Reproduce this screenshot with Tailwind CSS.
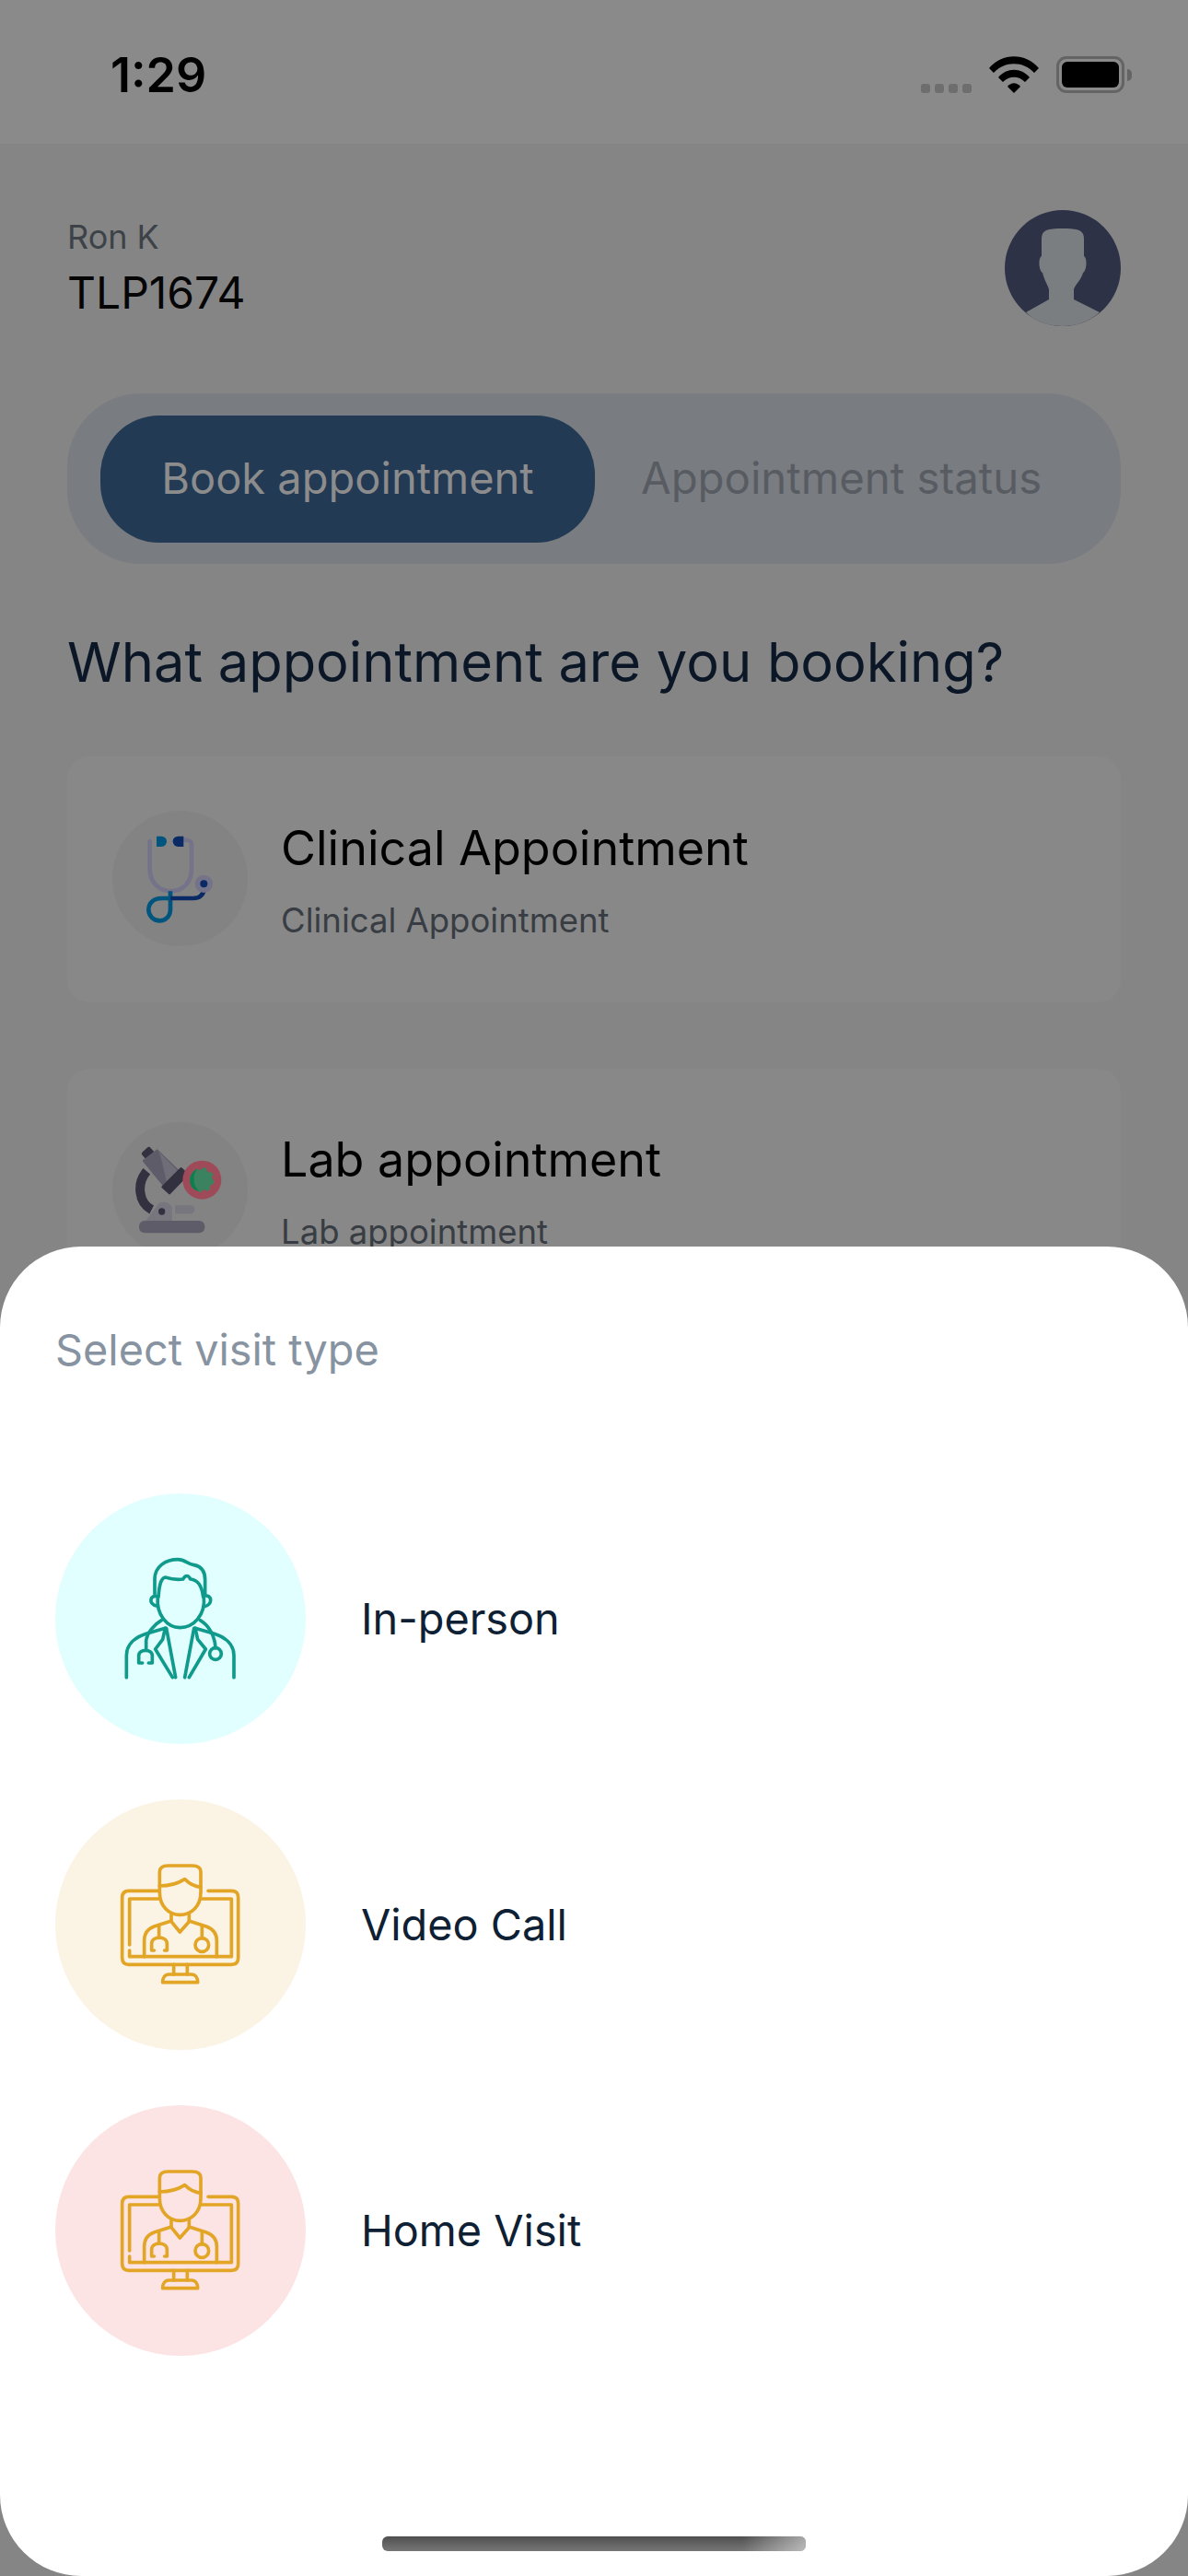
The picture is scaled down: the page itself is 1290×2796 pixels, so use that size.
<!DOCTYPE html>
<html lang="en">
<head>
    <meta charset="UTF-8">
    <meta name="viewport" content="width=device-width, initial-scale=1.0">
    <title>Select visit type</title>
    <script src="https://cdn.jsdelivr.net/npm/@tailwindcss/browser@4"></script>
</head>
<body class="bg-[#858585]">
    <div class="relative w-[1290px] h-[2796px] overflow-hidden bg-[#858585] font-['Inter',sans-serif]">

        <!-- status bar -->
        <div class="h-[156px] bg-[#8a8a8a] flex items-start justify-between pl-[120px] pr-[61px] pt-[52px]">
            <span class="text-[52px] leading-[60px] font-semibold text-black">1:29</span>
            <div class="flex items-start pt-[9px]">
                <div class="flex gap-[5px] mt-[30px] mr-[19px]">
                    <span class="w-[10px] h-[10px] rounded-[3px] bg-[#6e6e6e]"></span>
                    <span class="w-[10px] h-[10px] rounded-[3px] bg-[#6e6e6e]"></span>
                    <span class="w-[10px] h-[10px] rounded-[3px] bg-[#6e6e6e]"></span>
                    <span class="w-[10px] h-[10px] rounded-[3px] bg-[#6e6e6e]"></span>
                </div>
                <svg class="w-[54px] h-[40px] mr-[19px]" viewBox="0 0 54 40">
                    <path d="M0 13 C14 -4 40 -4 54 13 L49 18 C37 5 17 5 5 18 Z" fill="#000"/>
                    <path d="M10 23 C19 12 35 12 44 23 L39 28 C32 21 22 21 15 28 Z" fill="#000"/>
                    <path d="M20 33 C24 28 30 28 34 33 L27 40 Z" fill="#000"/>
                </svg>
                <div class="flex items-center">
                    <div class="w-[74px] h-[40px] rounded-[11px] border-[3px] border-[#646464] p-[3px]">
                        <div class="w-full h-full rounded-[6px] bg-black"></div>
                    </div>
                    <span class="w-[5px] h-[13px] ml-[3px] rounded-r-[5px] bg-[#646464]"></span>
                </div>
            </div>
        </div>

        <div class="px-[73px]">
            <!-- user row -->
            <div class="flex items-start justify-between pt-[72px]">
                <div class="pt-[7px]">
                    <p class="text-[36px] leading-[44px] text-[#3d4248]">Ron K</p>
                    <p class="text-[48px] leading-[56px] mt-[11px] text-[#050505]">TLP1674</p>
                </div>
                <svg class="w-[126px] h-[126px]" viewBox="0 0 126 126">
                    <circle cx="63" cy="63" r="63" fill="#2d3246"/>
                    <path d="M40 31 C40 21 48 20 63 20 C78 20 86 21 86 31 L86 50 C90 52 89 66 85 68 C83 76 77 80 75 86 L75 97 L103 111 C92 121 78 126 63 126 C48 126 33 121 23 111 L48 97 L48 86 C46 80 43 76 41 68 C37 66 36 52 40 50 Z" fill="#7a7e80"/>
                </svg>
            </div>

            <!-- tabs -->
            <div class="mt-[73px] h-[185px] rounded-[80px] bg-[#797c81] flex items-center pl-[36px]">
                <div class="w-[537px] h-[138px] rounded-[64px] bg-[#233a55] flex items-center justify-center text-[47px] text-[#8c8c8c]">Book appointment</div>
                <div class="pl-[50px] text-[47.3px] text-[#585c62]">Appointment status</div>
            </div>

            <h1 class="mt-[70px] text-[59.6px] leading-[72px] text-[#0b1726]">What appointment are you booking?</h1>

            <!-- appointment cards -->
            <div class="mt-[67px] flex flex-col gap-[72px]">
                <div class="h-[267px] rounded-[24px] bg-[#888888] flex items-start pt-[59px] pl-[49px]">
                    <div class="w-[147px] h-[147px] rounded-full bg-[#838383] shrink-0">
                        <svg class="w-[147px] h-[147px]" viewBox="0 0 441 441" fill="none">
                            <path d="M122 100 V190 C122 235 155 262 190 262 C228 262 258 235 258 190 L258 112 C258 100 252 95 235 95" stroke="#75738a" stroke-width="14" stroke-linecap="round"/>
                            <path d="M144 83 H160 A17 17 0 0 1 160 117 H144 Z" fill="#00557f"/>
                            <path d="M232 83 H214 A17 17 0 0 0 214 117 H232 Z" fill="#0a2a66"/>
                            <path d="M189 262 V320 C189 345 172 358 154 358 C134 358 118 342 118 322 C118 300 135 285 160 285 H189" stroke="#00557f" stroke-width="14"/>
                            <path d="M189 285 H264 C285 285 296 272 300 255" stroke="#0a2a66" stroke-width="14"/>
                            <circle cx="298" cy="238" r="29" fill="#75738a"/>
                            <circle cx="298" cy="238" r="12" fill="#0a2a66"/>
                        </svg>
                    </div>
                    <div class="ml-[36px] mt-[8px]">
                        <p class="text-[52px] leading-[66px] text-black">Clinical Appointment</p>
                        <p class="mt-[22px] text-[36.5px] leading-[46px] text-[#383d44]">Clinical Appointment</p>
                    </div>
                </div>
                <div class="h-[267px] rounded-[24px] bg-[#888888] flex items-start pt-[58px] pl-[49px]">
                    <div class="w-[147px] h-[147px] rounded-full bg-[#838383] shrink-0">
                        <svg class="w-[147px] h-[147px]" viewBox="0 0 441 441" fill="none">
                            <path d="M112 160 C78 200 85 262 128 285" stroke="#33313f" stroke-width="30"/>
                            <rect x="98" y="86" width="36" height="30" rx="7" transform="rotate(-42 116 101)" fill="#33313f"/>
                            <path d="M104 126 L146 94 L214 160 L170 206 Z" fill="#5e5c68" stroke="#5e5c68" stroke-width="10" stroke-linejoin="round"/>
                            <path d="M150 94 C162 120 170 170 178 198 L214 160 Z" fill="#6f6d77"/>
                            <path d="M224 151 L244 171 L186 231 L164 211 Z" fill="#33313f" stroke="#33313f" stroke-width="8" stroke-linejoin="round"/>
                            <circle cx="292" cy="188" r="63" fill="#9f4a58"/>
                            <circle cx="292" cy="188" r="34" fill="#3b8360"/>
                            <circle cx="292" cy="188" r="36" stroke="#3b8360" stroke-width="8" stroke-dasharray="14 14.3"/>
                            <path d="M278 152 C262 165 260 205 282 224 C262 222 252 204 253 188 C254 170 264 156 278 152 Z" fill="#0c7f4e"/>
                            <path d="M204 271 H256 C272 271 272 298 256 298 H204 Z" fill="#77757e"/>
                            <path d="M109 321 L150 266 C160 256 184 258 194 276 V321 Z" fill="#77757e"/>
                            <circle cx="161" cy="291" r="11" fill="#33313f"/>
                            <rect x="87" y="321" width="214" height="40" rx="18" fill="#5e5c68"/>
                        </svg>
                    </div>
                    <div class="ml-[36px] mt-[8px]">
                        <p class="text-[52px] leading-[66px] text-black">Lab appointment</p>
                        <p class="mt-[22px] text-[36.5px] leading-[46px] text-[#383d44]">Lab appointment</p>
                    </div>
                </div>
            </div>
        </div>

        <!-- bottom sheet -->
        <div class="absolute left-0 right-0 top-[1353px] bottom-0 rounded-[88px] bg-white px-[60px] pt-[84px]">
            <p class="text-[46.8px] leading-[56px] text-[#8793a1]">Select visit type</p>

            <div class="mt-[128px] flex flex-col gap-[60px]">
                <div class="flex items-center gap-[60px]">
                    <div class="w-[272px] h-[272px] rounded-full bg-[#e0fffe] shrink-0">
                        <svg class="w-[272px] h-[272px]" viewBox="0 0 816 816" fill="none" stroke="#0f9a8c" stroke-width="11" stroke-linecap="round" stroke-linejoin="round">
                            <g transform="translate(0 -3)">
                                <path d="M324 330 V282 C324 240 360 218 400 218 C422 218 430 232 452 236 C474 240 488 256 488 284 V330"/>
                                <path d="M336 340 C338 310 342 280 358 276 C378 282 400 284 416 282 C424 268 434 268 440 282 C466 284 478 306 482 340"/>
                                <path d="M334 338 C328 400 366 440 406 440 C450 440 490 400 484 338"/>
                                <path d="M332 338 C310 332 300 362 332 370"/>
                                <path d="M486 336 C512 332 514 366 484 372"/>
                                <path d="M232 602 V530 C232 496 258 472 296 460 L358 442"/>
                                <path d="M582 602 V530 C582 496 556 472 518 460 L456 442"/>
                                <path d="M358 442 L350 478 L326 510 L382 602"/>
                                <path d="M362 442 L392 602"/>
                                <path d="M456 442 L464 478 L490 510 L436 602"/>
                                <path d="M452 442 L422 602"/>
                                <path d="M346 416 C322 430 300 456 296 482 V510"/>
                                <path d="M284 555 H272 V532 C272 508 316 508 316 532 V555 H304"/>
                                <path d="M472 416 C496 430 520 462 522 506"/>
                                <circle cx="522" cy="525" r="19"/>
                            </g>
                        </svg>
                    </div>
                    <span class="text-[46.8px] text-[#0e2033]">In-person</span>
                </div>

                <div class="flex items-center gap-[60px]">
                    <div class="w-[272px] h-[272px] rounded-full bg-[#fbf3e4] shrink-0">
                        <svg class="w-[272px] h-[272px]" viewBox="0 0 816 816" fill="none" stroke="#e3a526" stroke-width="11" stroke-linecap="round" stroke-linejoin="round">
                            <g transform="translate(0 -10)">
                                <path d="M334 308 H240 C226 308 218 316 218 330 V526 C218 540 226 548 240 548 H574 C588 548 596 540 596 526 V330 C596 316 588 308 574 308 H498"/>
                                <path d="M340 334 H242 V484 M242 502 V522 H574 V334 H474"/>
                                <path d="M340 290 V246 C340 232 350 226 368 226 H446 C464 226 474 232 474 246 V296"/>
                                <path d="M340 292 C370 292 400 284 422 270 C434 282 452 294 474 296"/>
                                <path d="M340 292 V312 C340 358 370 386 406 386 C444 386 474 358 474 312 V296"/>
                                <path d="M378 382 V408 L406 442 L436 408 V382"/>
                                <path d="M378 406 L322 424 C300 432 290 448 290 470 V522"/>
                                <path d="M436 406 L492 424 C514 432 526 448 526 470 V522"/>
                                <path d="M338 424 V460"/>
                                <path d="M322 502 H314 V480 C314 454 364 454 364 480 V502 H356"/>
                                <path d="M478 424 V462"/>
                                <circle cx="478" cy="484" r="22"/>
                                <path d="M386 548 V580 M430 548 V580"/>
                                <path d="M370 580 H444 C456 580 464 590 464 606 H350 C350 590 358 580 370 580 Z"/>
                            </g>
                        </svg>
                    </div>
                    <span class="text-[46.8px] text-[#0e2033]">Video Call</span>
                </div>

                <div class="flex items-center gap-[60px]">
                    <div class="w-[272px] h-[272px] rounded-full bg-[#fce4e5] shrink-0">
                        <svg class="w-[272px] h-[272px]" viewBox="0 0 816 816" fill="none" stroke="#e3a526" stroke-width="11" stroke-linecap="round" stroke-linejoin="round">
                            <g transform="translate(0 -10)">
                                <path d="M334 308 H240 C226 308 218 316 218 330 V526 C218 540 226 548 240 548 H574 C588 548 596 540 596 526 V330 C596 316 588 308 574 308 H498"/>
                                <path d="M340 334 H242 V484 M242 502 V522 H574 V334 H474"/>
                                <path d="M340 290 V246 C340 232 350 226 368 226 H446 C464 226 474 232 474 246 V296"/>
                                <path d="M340 292 C370 292 400 284 422 270 C434 282 452 294 474 296"/>
                                <path d="M340 292 V312 C340 358 370 386 406 386 C444 386 474 358 474 312 V296"/>
                                <path d="M378 382 V408 L406 442 L436 408 V382"/>
                                <path d="M378 406 L322 424 C300 432 290 448 290 470 V522"/>
                                <path d="M436 406 L492 424 C514 432 526 448 526 470 V522"/>
                                <path d="M338 424 V460"/>
                                <path d="M322 502 H314 V480 C314 454 364 454 364 480 V502 H356"/>
                                <path d="M478 424 V462"/>
                                <circle cx="478" cy="484" r="22"/>
                                <path d="M386 548 V580 M430 548 V580"/>
                                <path d="M370 580 H444 C456 580 464 590 464 606 H350 C350 590 358 580 370 580 Z"/>
                            </g>
                        </svg>
                    </div>
                    <span class="text-[46.8px] text-[#0e2033]">Home Visit</span>
                </div>
            </div>

            <!-- home indicator -->
            <div class="absolute left-[415px] top-[1400px] w-[460px] h-[16px] rounded-[6px] overflow-hidden bg-gradient-to-b from-[#4f4f4f] to-[#777777]">
                <div class="w-full h-full bg-gradient-to-r from-transparent via-transparent via-85% to-white/50"></div>
            </div>
        </div>
    </div>
</body>
</html>
